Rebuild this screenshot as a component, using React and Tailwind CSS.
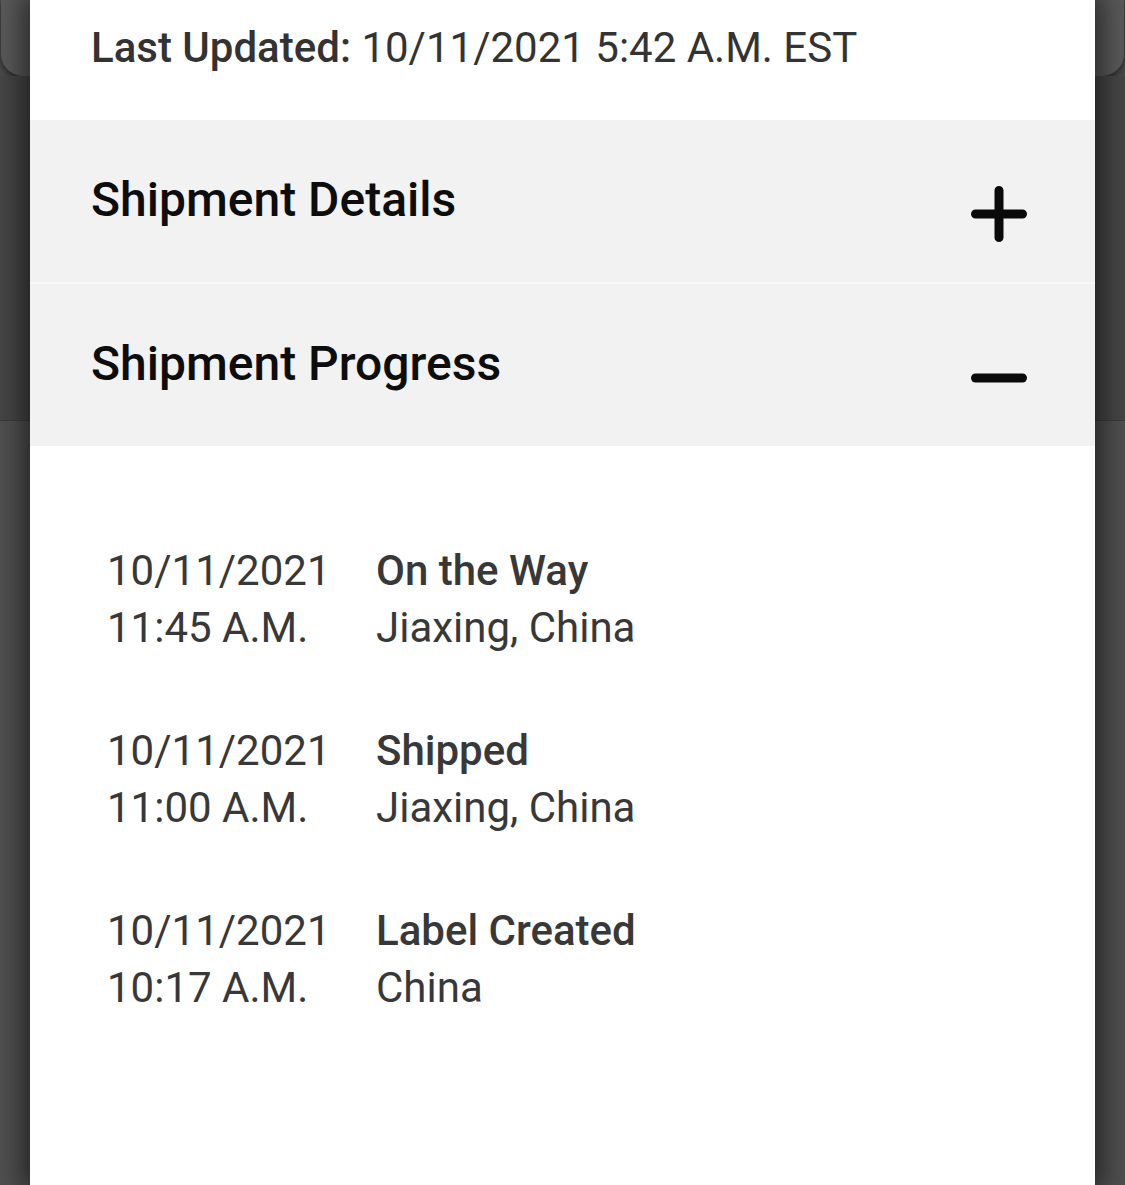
import React from 'react';

const events = [
    { date: '10/11/2021', time: '11:45 A.M.', status: 'On the Way', place: 'Jiaxing, China' },
    { date: '10/11/2021', time: '11:00 A.M.', status: 'Shipped', place: 'Jiaxing, China' },
    { date: '10/11/2021', time: '10:17 A.M.', status: 'Label Created', place: 'China' },
];

function PlusIcon() {
    return (
        <svg width="56" height="56" viewBox="0 0 56 56" className="block">
            <path d="M28 4.5V51.5M4.5 28H51.5" stroke="#0a0a0a" strokeWidth="9" strokeLinecap="round" />
        </svg>
    );
}

function MinusIcon() {
    return (
        <svg width="56" height="56" viewBox="0 0 56 56" className="block">
            <path d="M4.5 28H51.5" stroke="#0a0a0a" strokeWidth="9" strokeLinecap="round" />
        </svg>
    );
}

function SectionHeader({ title, open }) {
    return (
        <div className="h-[162px] bg-[#f2f2f2] flex items-center justify-between pl-[61px] pr-[68px]">
            <h2 className="text-[48px] leading-none font-medium text-[#0d0d0d] -mt-[2px]">{title}</h2>
            <div className="mt-[26px]">{open ? <MinusIcon /> : <PlusIcon />}</div>
        </div>
    );
}

export default function App() {
    return (
        <div className="relative w-full h-[1185px] overflow-hidden bg-[#4b4b4b]" style={{ fontFamily: 'Roboto, "Noto Sans", sans-serif' }}>
            {/* page behind the sheet */}
            <div className="flex flex-col h-full">
                <div className="h-[76px] bg-[#5a5a5a] rounded-b-[22px] shadow-[0_3px_6px_rgba(0,0,0,0.45)] mx-[1px]" />
                <div className="h-[344px] bg-[#464646]" />
                <div className="flex-1 bg-[#505050] border-t border-[#3c3c3c]" />
            </div>

            {/* sheet */}
            <div className="absolute top-0 bottom-0 left-[30px] right-[30px] bg-white shadow-[0_0_26px_8px_rgba(0,0,0,0.55)] flex flex-col">
                <div className="h-[120px] pl-[61px] pt-[27px]">
                    <p className="text-[42px] leading-none text-[#333333]">
                        <span className="font-medium">Last Updated:</span> 10/11/2021 5:42 A.M. EST
                    </p>
                </div>
                <SectionHeader title="Shipment Details" />
                <div className="h-[2px] bg-[#f8f8f8]" />
                <SectionHeader title="Shipment Progress" open />

                <div className="flex flex-col gap-[66px] pl-[77px] pt-[96px]">
                    {events.map((e, i) => (
                        <div key={i} className="grid grid-cols-[269px_1fr] text-[42px] leading-[57px] text-[#383838]">
                            <div>
                                <div>{e.date}</div>
                                <div>{e.time}</div>
                            </div>
                            <div>
                                <div className="font-medium">{e.status}</div>
                                <div>{e.place}</div>
                            </div>
                        </div>
                    ))}
                </div>
            </div>
        </div>
    );
}
